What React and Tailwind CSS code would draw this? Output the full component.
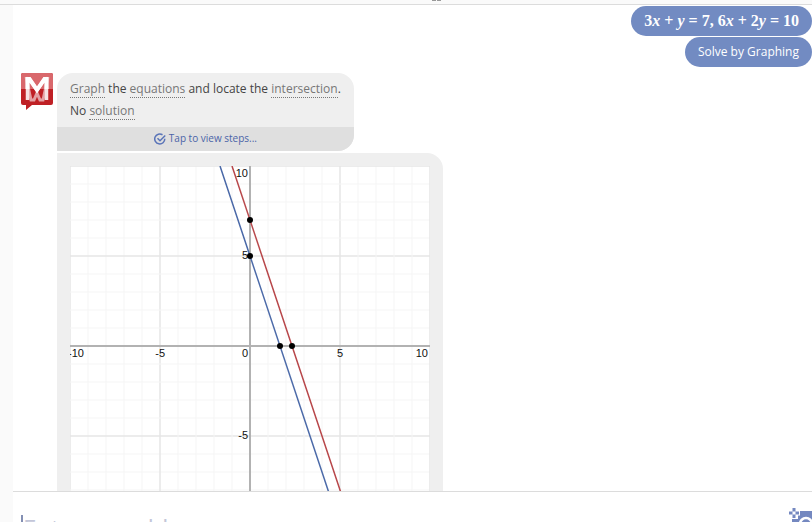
import React from "react";

const UNIT = 18;
const toX = (v) => 180 + v * UNIT;
const toY = (v) => 180 - v * UNIT;
const TICKS = Array.from({ length: 21 }, (_, i) => i - 10);
const POINTS = [[0, 7], [0, 5], [5 / 3, 0], [7 / 3, 0]];

function Logo() {
  return (
    <svg viewBox="0 0 32 37" className="h-[37px] w-8 shrink-0" role="img" aria-label="Mathway">
      <path d="M2 0h28a2 2 0 0 1 2 2v28a2 2 0 0 1-2 2H11l-6 5V32H2a2 2 0 0 1-2-2V2a2 2 0 0 1 2-2z" fill="#bf2025" />
      <path d="M2 0h28a2 2 0 0 1 2 2v14H0V2a2 2 0 0 1 2-2z" fill="#d9686c" />
      <path d="M5 4l5 23h3l3-7 3 7h3l5-23" fill="none" stroke="#e3a0a3" strokeWidth="3" />
      <path d="M6.500 27V6h2L16 17l7.500-11h2v21" fill="none" stroke="#f6e2e3" strokeWidth="3.500" />
      <path d="M6.500 16V6h2L16 17l7.500-11h2v10" fill="none" stroke="#fff" strokeWidth="4" />
    </svg>
  );
}

function CheckIcon() {
  return (
    <svg viewBox="0 0 24 24" className="h-3 w-3" fill="none" stroke="#5a74b8" strokeWidth="3" aria-hidden="true">
      <path d="M21.500 11.500A10 10 0 1 1 17 3.500" />
      <path d="M7 10.500l5 5L22.500 5" />
    </svg>
  );
}

function CameraIcon() {
  return (
    <svg viewBox="0 0 32 32" className="h-8 w-8" aria-hidden="true">
      <path d="M10 4h14l3 3h5v22H4V12h6z" fill="#7488c0" />
      <path d="M6 0v12M0 6h12" stroke="#fff" strokeWidth="5" />
      <path d="M6 1v3.500M6 7.500V11M1 6h3.500M7.500 6H11" stroke="#7488c0" strokeWidth="3" />
      <circle cx="18" cy="17" r="6" fill="none" stroke="#fff" strokeWidth="2.500" />
    </svg>
  );
}

function Graph() {
  return (
    <svg viewBox="0 0 360 360" className="block h-[360px] w-[360px] bg-white" role="img" aria-label="Two parallel lines">
      {TICKS.map((t) => (
        <g key={t} stroke={t % 5 === 0 ? "#e6e6e6" : "#f5f5f5"} strokeWidth={t % 5 === 0 ? 1.5 : 1}>
          <line x1={toX(t)} x2={toX(t)} y1="0" y2="360" />
          <line y1={toY(t)} y2={toY(t)} x1="0" x2="360" />
        </g>
      ))}
      <path d="M180 0V360M0 180H360" stroke="#b2b2b2" strokeWidth="2" />
      <g fontFamily="Liberation Sans, sans-serif" fontSize="11" fill="#111" textAnchor="end">
        <text x="14" y="191">-10</text>
        <text x="95" y="191">-5</text>
        <text x="178" y="191">0</text>
        <text x="273" y="191">5</text>
        <text x="358" y="191">10</text>
        <text x="178" y="11">10</text>
        <text x="178" y="93">5</text>
        <text x="178" y="273">-5</text>
      </g>
      <line x1={toX(-5 / 3)} y1={toY(10)} x2={toX(5)} y2={toY(-10)} stroke="#4a69a8" strokeWidth="1.500" />
      <line x1={toX(-1)} y1={toY(10)} x2={toX(17 / 3)} y2={toY(-10)} stroke="#b8474a" strokeWidth="1.500" />
      {POINTS.map(([x, y]) => (
        <circle key={`${x},${y}`} cx={toX(x)} cy={toY(y)} r="3" fill="#000" />
      ))}
    </svg>
  );
}

function Term({ children }) {
  return (
    <a href="#glossary" className="inline-block border-b border-dotted border-[#777] leading-4 text-[#777]">
      {children}
    </a>
  );
}

export default function App() {
  return (
    <div className="flex h-screen flex-col overflow-hidden bg-white font-['Open_Sans','Noto_Sans',sans-serif] text-xs text-[#444]">
      <header className="flex h-[5px] shrink-0 justify-center border-b border-[#dcdcdc] bg-[#fafafa]">
        <div className="ml-15 flex gap-px">
          <span className="h-px w-1 bg-[#999]" />
          <span className="h-px w-1 bg-[#999]" />
        </div>
      </header>
      <div className="flex min-h-0 flex-1">
        <aside className="w-[13px] shrink-0 bg-[#fafafa]" />
        <div className="flex min-w-0 flex-1 flex-col">
          <main className="min-h-0 flex-1 overflow-hidden pt-px">
            <div className="flex flex-col items-end gap-px text-white">
              <div className="flex h-[30px] items-center rounded-full bg-[#728bc2] px-[13px] font-['Liberation_Serif',serif] text-base font-bold whitespace-pre">
                <span>3<i>x</i> + <i>y</i> = 7, 6<i>x</i> + 2<i>y</i> = 10</span>
              </div>
              <div className="flex h-[30px] items-center rounded-full bg-[#728bc2] px-[13px]">Solve by Graphing</div>
            </div>
            <div className="mt-[6px] flex items-start gap-1 pl-2">
              <Logo />
              <div className="flex flex-col items-start gap-[2px]">
                <section className="overflow-hidden rounded-r-2xl rounded-tl-2xl bg-[#efefef]">
                  <div className="px-[13px] py-[5px] leading-[22px]">
                    <p><Term>Graph</Term> the <Term>equations</Term> and locate the <Term>intersection</Term>.</p>
                    <p>No <Term>solution</Term></p>
                  </div>
                  <button className="flex h-6 w-full items-center justify-center gap-[3px] bg-[#dfdfdf] text-[10px] text-[#4b64a8]">
                    <CheckIcon />
                    Tap to view steps...
                  </button>
                </section>
                <section className="rounded-tr-2xl bg-[#efefef] p-[13px]">
                  <Graph />
                </section>
              </div>
            </div>
          </main>
          <footer className="flex h-[31px] shrink-0 items-start justify-between overflow-hidden border-t border-[#dcdcdc] pt-[15px] pl-2">
            <input
              aria-label="Enter a problem"
              placeholder="Enter a problem..."
              className="mt-2 h-6 min-w-0 flex-1 border-l-2 border-[#8490b4] text-2xl leading-6 outline-none placeholder:text-[#c3c6d8]"
            />
            <button aria-label="Use camera" className="-mr-2 shrink-0"><CameraIcon /></button>
          </footer>
        </div>
      </div>
    </div>
  );
}
